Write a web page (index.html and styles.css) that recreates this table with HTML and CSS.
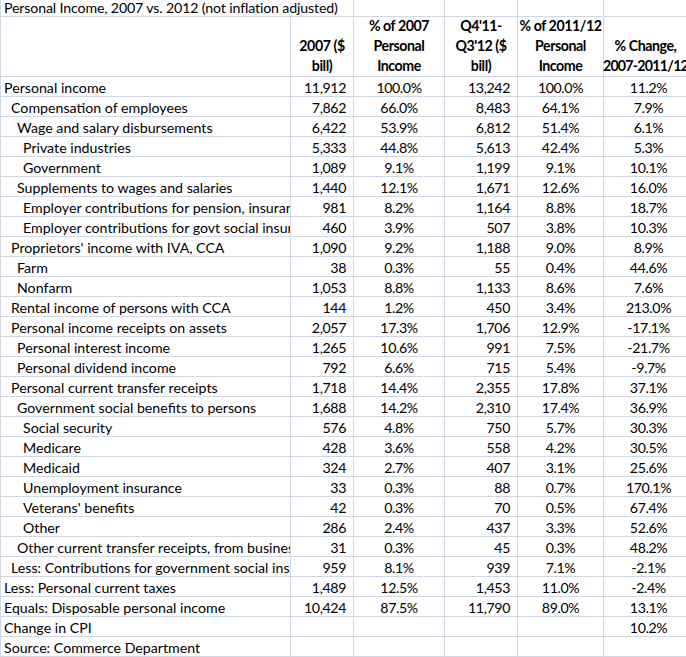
FILE: index.html
```html
<!DOCTYPE html>
<html>
<head>
<meta charset="utf-8">
<link rel="stylesheet" href="styles.css">
</head>
<body>
<div class="sheet">
  <div class="c title">Personal Income, 2007 vs. 2012 (not inflation adjusted)</div>
  <div class="c"></div><div class="c"></div><div class="c"></div><div class="c"></div>

  <div class="c hd"></div>
  <div class="c hd"><span>2007 ($</span><span>bill)</span></div>
  <div class="c hd"><span>% of 2007</span><span>Personal</span><span>Income</span></div>
  <div class="c hd"><span>Q4'11-</span><span>Q3'12 ($</span><span>bill)</span></div>
  <div class="c hd"><span>% of 2011/12</span><span>Personal</span><span>Income</span></div>
  <div class="c hd hd-last"><span>% Change,</span><span class="tight">2007-2011/12</span></div>

  <div class="c l0">Personal income</div><div class="c n">11,912</div><div class="c p">100.0%</div><div class="c n">13,242</div><div class="c p">100.0%</div><div class="c p">11.2%</div>
  <div class="c l1">Compensation of employees</div><div class="c n">7,862</div><div class="c p">66.0%</div><div class="c n">8,483</div><div class="c p">64.1%</div><div class="c p">7.9%</div>
  <div class="c l2">Wage and salary disbursements</div><div class="c n">6,422</div><div class="c p">53.9%</div><div class="c n">6,812</div><div class="c p">51.4%</div><div class="c p">6.1%</div>
  <div class="c l3">Private industries</div><div class="c n">5,333</div><div class="c p">44.8%</div><div class="c n">5,613</div><div class="c p">42.4%</div><div class="c p">5.3%</div>
  <div class="c l3">Government</div><div class="c n">1,089</div><div class="c p">9.1%</div><div class="c n">1,199</div><div class="c p">9.1%</div><div class="c p">10.1%</div>
  <div class="c l2">Supplements to wages and salaries</div><div class="c n">1,440</div><div class="c p">12.1%</div><div class="c n">1,671</div><div class="c p">12.6%</div><div class="c p">16.0%</div>
  <div class="c l3">Employer contributions for pension, insurance funds</div><div class="c n">981</div><div class="c p">8.2%</div><div class="c n">1,164</div><div class="c p">8.8%</div><div class="c p">18.7%</div>
  <div class="c l3">Employer contributions for govt social insurance</div><div class="c n">460</div><div class="c p">3.9%</div><div class="c n">507</div><div class="c p">3.8%</div><div class="c p">10.3%</div>
  <div class="c l1">Proprietors' income with IVA, CCA</div><div class="c n">1,090</div><div class="c p">9.2%</div><div class="c n">1,188</div><div class="c p">9.0%</div><div class="c p">8.9%</div>
  <div class="c l2">Farm</div><div class="c n">38</div><div class="c p">0.3%</div><div class="c n">55</div><div class="c p">0.4%</div><div class="c p">44.6%</div>
  <div class="c l2">Nonfarm</div><div class="c n">1,053</div><div class="c p">8.8%</div><div class="c n">1,133</div><div class="c p">8.6%</div><div class="c p">7.6%</div>
  <div class="c l1">Rental income of persons with CCA</div><div class="c n">144</div><div class="c p">1.2%</div><div class="c n">450</div><div class="c p">3.4%</div><div class="c p">213.0%</div>
  <div class="c l1">Personal income receipts on assets</div><div class="c n">2,057</div><div class="c p">17.3%</div><div class="c n">1,706</div><div class="c p">12.9%</div><div class="c p">-17.1%</div>
  <div class="c l2">Personal interest income</div><div class="c n">1,265</div><div class="c p">10.6%</div><div class="c n">991</div><div class="c p">7.5%</div><div class="c p">-21.7%</div>
  <div class="c l2">Personal dividend income</div><div class="c n">792</div><div class="c p">6.6%</div><div class="c n">715</div><div class="c p">5.4%</div><div class="c p">-9.7%</div>
  <div class="c l1">Personal current transfer receipts</div><div class="c n">1,718</div><div class="c p">14.4%</div><div class="c n">2,355</div><div class="c p">17.8%</div><div class="c p">37.1%</div>
  <div class="c l2">Government social benefits to persons</div><div class="c n">1,688</div><div class="c p">14.2%</div><div class="c n">2,310</div><div class="c p">17.4%</div><div class="c p">36.9%</div>
  <div class="c l3">Social security</div><div class="c n">576</div><div class="c p">4.8%</div><div class="c n">750</div><div class="c p">5.7%</div><div class="c p">30.3%</div>
  <div class="c l3">Medicare</div><div class="c n">428</div><div class="c p">3.6%</div><div class="c n">558</div><div class="c p">4.2%</div><div class="c p">30.5%</div>
  <div class="c l3">Medicaid</div><div class="c n">324</div><div class="c p">2.7%</div><div class="c n">407</div><div class="c p">3.1%</div><div class="c p">25.6%</div>
  <div class="c l3">Unemployment insurance</div><div class="c n">33</div><div class="c p">0.3%</div><div class="c n">88</div><div class="c p">0.7%</div><div class="c p">170.1%</div>
  <div class="c l3">Veterans' benefits</div><div class="c n">42</div><div class="c p">0.3%</div><div class="c n">70</div><div class="c p">0.5%</div><div class="c p">67.4%</div>
  <div class="c l3">Other</div><div class="c n">286</div><div class="c p">2.4%</div><div class="c n">437</div><div class="c p">3.3%</div><div class="c p">52.6%</div>
  <div class="c l2">Other current transfer receipts, from business (net)</div><div class="c n">31</div><div class="c p">0.3%</div><div class="c n">45</div><div class="c p">0.3%</div><div class="c p">48.2%</div>
  <div class="c l1">Less: Contributions for government social insurance</div><div class="c n">959</div><div class="c p">8.1%</div><div class="c n">939</div><div class="c p">7.1%</div><div class="c p">-2.1%</div>
  <div class="c l0">Less: Personal current taxes</div><div class="c n">1,489</div><div class="c p">12.5%</div><div class="c n">1,453</div><div class="c p">11.0%</div><div class="c p">-2.4%</div>
  <div class="c l0">Equals: Disposable personal income</div><div class="c n">10,424</div><div class="c p">87.5%</div><div class="c n">11,790</div><div class="c p">89.0%</div><div class="c p">13.1%</div>
  <div class="c l0">Change in CPI</div><div class="c n"></div><div class="c p"></div><div class="c n"></div><div class="c p"></div><div class="c p">10.2%</div>
  <div class="c l0">Source: Commerce Department</div><div class="c n"></div><div class="c p"></div><div class="c n"></div><div class="c p"></div><div class="c p"></div>
</div>
</body>
</html>
```

FILE: styles.css
```css
html, body {
  margin: 0;
  padding: 0;
  background: #ffffff;
  overflow: hidden;
}

.sheet {
  display: grid;
  grid-template-columns: 290px 63px 91px 73px 86px 90px;
  grid-template-rows: 17px 60px repeat(29, 20px);
  border-left: 1px solid #d0d7e5;
  width: max-content;
  font-family: Lato, "Liberation Sans", sans-serif;
  font-size: 14.2px;
  color: #000000;
}

.c {
  box-sizing: border-box;
  border-right: 1px solid #d0d7e5;
  border-bottom: 1px solid #d0d7e5;
  line-height: 19px;
  white-space: nowrap;
  overflow: hidden;
  padding-top: 1px;
}

.title {
  grid-column: span 2;
  line-height: 16px;
  padding-top: 0;
  padding-left: 3px;
  letter-spacing: -0.15px;
  overflow: visible;
}

.hd {
  display: flex;
  flex-direction: column;
  justify-content: flex-end;
  align-items: center;
  font-weight: bold;
  font-size: 14.2px;
  letter-spacing: -0.45px;
  line-height: 20px;
  padding-top: 0;
  padding-bottom: 0;
  overflow: visible;
}

.hd-last {
  padding-right: 6px;
}

.tight {
  letter-spacing: -0.75px;
}

.l0 { padding-left: 3px; }
.l1 { padding-left: 10px; }
.l2 { padding-left: 16px; }
.l3 { padding-left: 22px; }

.n {
  text-align: right;
  padding-right: 7px;
  letter-spacing: -0.4px;
}

.p {
  text-align: center;
  letter-spacing: -0.4px;
}
```
